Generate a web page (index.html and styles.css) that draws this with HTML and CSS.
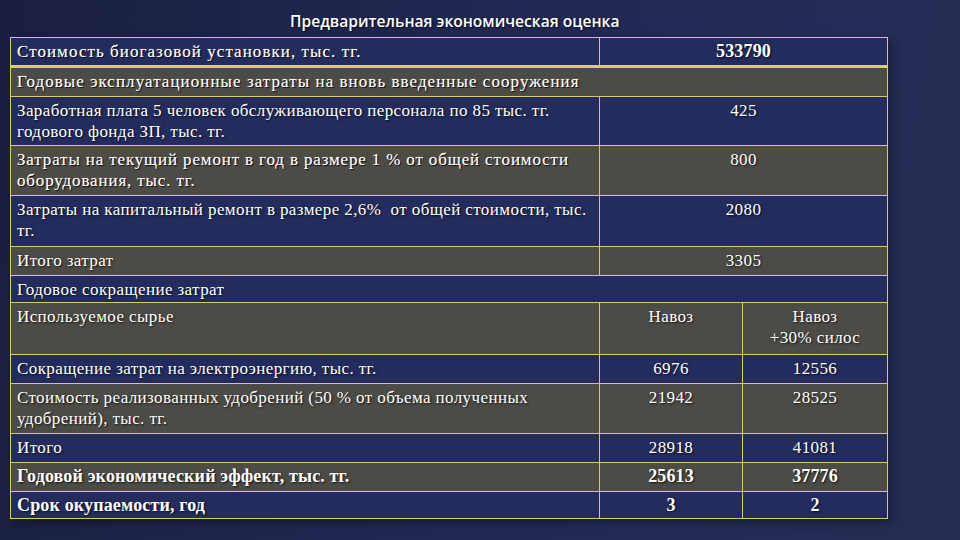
FILE: index.html
```html
<!DOCTYPE html>
<html lang="ru">
<head>
<meta charset="utf-8">
<title>Предварительная экономическая оценка</title>
<link rel="stylesheet" href="styles.css">
</head>
<body>
<div class="slide">
  <h1 class="title">Предварительная экономическая оценка</h1>
  <table class="grid">
    <colgroup><col class="c1"><col class="c2"><col class="c3"></colgroup>
    <tr class="r blue h29 thick">
      <td class="pal">Стоимость биогазовой установки, тыс. тг.</td>
      <td class="num b" colspan="2">533790</td>
    </tr>
    <tr class="r grey h30">
      <td class="pal" colspan="3">Годовые эксплуатационные затраты на вновь введенные сооружения</td>
    </tr>
    <tr class="r blue h49">
      <td>Заработная плата 5 человек обслуживающего персонала по 85 тыс. тг. годового фонда ЗП, тыс. тг.</td>
      <td class="num" colspan="2">425</td>
    </tr>
    <tr class="r grey h50">
      <td class="pal2">Затраты на текущий ремонт в год в размере 1 % от общей стоимости оборудования, тыс. тг.</td>
      <td class="num" colspan="2">800</td>
    </tr>
    <tr class="r blue h51">
      <td>Затраты на капитальный ремонт в размере 2,6%&nbsp; от общей стоимости, тыс. тг.</td>
      <td class="num" colspan="2">2080</td>
    </tr>
    <tr class="r grey h29">
      <td>Итого затрат</td>
      <td class="num" colspan="2">3305</td>
    </tr>
    <tr class="r blue h27">
      <td colspan="3">Годовое сокращение затрат</td>
    </tr>
    <tr class="r grey h52">
      <td>Используемое сырье</td>
      <td class="num">Навоз</td>
      <td class="num">Навоз<br>+30% силос</td>
    </tr>
    <tr class="r blue h29">
      <td>Сокращение затрат на электроэнергию, тыс. тг.</td>
      <td class="num">6976</td>
      <td class="num">12556</td>
    </tr>
    <tr class="r grey h50">
      <td>Стоимость реализованных удобрений (50 % от объема полученных удобрений), тыс. тг.</td>
      <td class="num">21942</td>
      <td class="num">28525</td>
    </tr>
    <tr class="r blue h29">
      <td>Итого</td>
      <td class="num">28918</td>
      <td class="num">41081</td>
    </tr>
    <tr class="r grey h29">
      <td class="b">Годовой экономический эффект, тыс. тг.</td>
      <td class="num b">25613</td>
      <td class="num b">37776</td>
    </tr>
    <tr class="r blue h27">
      <td class="b">Срок окупаемости, год</td>
      <td class="num b">3</td>
      <td class="num b">2</td>
    </tr>
  </table>
</div>
</body>
</html>
```

FILE: styles.css
```css
html, body {
  margin: 0;
  padding: 0;
}

body {
  width: 960px;
  height: 540px;
  overflow: hidden;
  background: linear-gradient(100deg, #1a1f3f 0%, #202852 45%, #242c56 75%, #262d54 100%);
}

.slide {
  display: flex;
  flex-direction: column;
  padding: 0 0 0 10px;
}

.title {
  margin: 0;
  height: 37px;
  box-sizing: border-box;
  padding: 10px 0 0 280px;
  font-family: "Open Sans", "Noto Sans", sans-serif;
  font-weight: 600;
  font-size: 15.6px;
  line-height: 22px;
  color: #ffffff;
  text-shadow: 1px 1px 2px rgba(0, 0, 0, 0.7);
}

.grid {
  border-collapse: collapse;
  width: 877px;
  table-layout: fixed;
  font-family: "Liberation Serif", "Times New Roman", serif;
  font-size: 17px;
  letter-spacing: 0.4px;
  line-height: 21px;
  color: #ffffff;
  box-shadow: 4px 4px 8px rgba(0, 0, 0, 0.35);
}

.c1 { width: 589px; }
.c2 { width: 143px; }
.c3 { width: 145px; }

.grid td {
  border: 1px solid #d6cb6e;
  padding: 3px 8px 0 6px;
  vertical-align: top;
  text-shadow: 1px 1px 2px rgba(0, 0, 0, 0.75);
  box-sizing: border-box;
}

.grid td.num {
  padding-left: 8px;
  text-align: center;
}

.blue td { background: #232c5d; }
.grey td { background: #4c4b45; }

.thick td { border-bottom: 3px solid #d9cf6a; }

.h27 { height: 27px; }
.h29 { height: 29px; }
.h30 { height: 30px; }
.h49 { height: 49px; }
.h50 { height: 50px; }
.h51 { height: 51px; }
.h52 { height: 52px; }

.grid .b {
  font-weight: 700;
  font-size: 18px;
  letter-spacing: 0.15px;
}

.grid .pal,
.grid .pal2 {
  letter-spacing: 1.05px;
  text-shadow: 1px 1px 1px rgba(0, 0, 0, 0.9), 0 0 1px rgba(255, 255, 255, 0.5);
}

.grid .pal2 {
  letter-spacing: 0.85px;
}
```
